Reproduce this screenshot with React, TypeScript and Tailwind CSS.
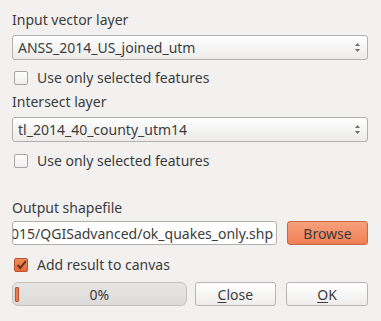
const font = { fontFamily: '"Noto Sans", "DejaVu Sans", sans-serif' };

function ComboBox({ value }: { value: string }) {
  return (
    <div className="flex h-[25px] items-center justify-between rounded-[3px] border border-[#b4b1ad] bg-gradient-to-b from-white to-[#ecebea] pl-[5px] pr-[6px] shadow-[inset_0_1px_0_#fff]">
      <span className="text-[14px] leading-[18px] text-[#3c3c3c]">{value}</span>
      <svg width="7" height="11" viewBox="0 0 7 11" className="text-[#6e6c6a]">
        <path d="M3.5 1 L6 4 L1 4 Z" fill="currentColor" />
        <path d="M3.5 10 L6 7 L1 7 Z" fill="currentColor" />
      </svg>
    </div>
  );
}

function CheckRow({ label, checked }: { label: string; checked?: boolean }) {
  return (
    <div className="flex h-[16px] items-center gap-[9px] pl-[2px]">
      {checked ? (
        <span className="flex h-[14px] w-[14px] items-center justify-center rounded-[2px] border border-[#b8542c] bg-gradient-to-b from-[#f4895a] to-[#e8693a]">
          <svg width="11" height="10" viewBox="0 0 11 10">
            <path d="M1.5 5 L4.2 8 L9.8 1.2" fill="none" stroke="#5a3424" strokeWidth="2" />
          </svg>
        </span>
      ) : (
        <span className="h-[14px] w-[14px] rounded-[2px] border border-[#a9a6a2] bg-gradient-to-b from-[#fdfdfd] to-[#f0efee]" />
      )}
      <span className="text-[14px] leading-[18px] text-[#3c3c3c]">{label}</span>
    </div>
  );
}

function Button({ children, accent }: { children: React.ReactNode; accent?: boolean }) {
  return (
    <div
      className={
        accent
          ? "flex h-[24px] w-[81px] items-center justify-center rounded-[3px] border border-[#c66a44] bg-gradient-to-b from-[#f7a07c] to-[#ef7f55] text-[14px] text-[#3c3c3c]"
          : "flex h-[24px] w-[82px] items-center justify-center rounded-[3px] border border-[#b9b6b2] bg-gradient-to-b from-white to-[#eeedec] text-[14px] text-[#3c3c3c]"
      }
    >
      {children}
    </div>
  );
}

export default function App() {
  return (
    <div style={font} className="h-[321px] w-[381px] bg-[#f2f1f0] pl-[12px] pr-[13px] pt-[11px] text-[#3c3c3c]">
      <div className="text-[14px] leading-[18px]">Input vector layer</div>
      <div className="mt-[6px]">
        <ComboBox value="ANSS_2014_US_joined_utm" />
      </div>
      <div className="mt-[10px]">
        <CheckRow label="Use only selected features" />
      </div>
      <div className="mt-[7px] text-[14px] leading-[18px]">Intersect layer</div>
      <div className="mt-[6px]">
        <ComboBox value="tl_2014_40_county_utm14" />
      </div>
      <div className="mt-[11px]">
        <CheckRow label="Use only selected features" />
      </div>
      <div className="mt-[30px] text-[14px] leading-[18px]">Output shapefile</div>
      <div className="mt-[4px] flex gap-[10px]">
        <div className="flex h-[24px] flex-1 items-center justify-end overflow-hidden rounded-[3px] border border-[#b4b1ad] bg-white pr-[3px]">
          <span className="whitespace-nowrap text-[14px]">2015/QGISadvanced/ok_quakes_only.shp</span>
        </div>
        <Button accent>Browse</Button>
      </div>
      <div className="mt-[12px]">
        <CheckRow label="Add result to canvas" checked />
      </div>
      <div className="mt-[9px] flex gap-[8px]">
        <div className="relative flex h-[24px] w-[176px] items-center justify-center rounded-[6px] border border-[#c5c2be] bg-gradient-to-b from-[#e6e5e3] to-[#dedcda]">
          <span className="absolute left-[2px] top-[4px] h-[15px] w-[4px] rounded-[1px] border border-[#b8542c] bg-[#ef7a4c]" />
          <span className="text-[14px]">0%</span>
        </div>
        <Button>
          <span><span className="underline underline-offset-2">C</span>lose</span>
        </Button>
        <div className="ml-[2px]">
          <Button>
            <span><span className="underline underline-offset-2">O</span>K</span>
          </Button>
        </div>
      </div>
    </div>
  );
}
